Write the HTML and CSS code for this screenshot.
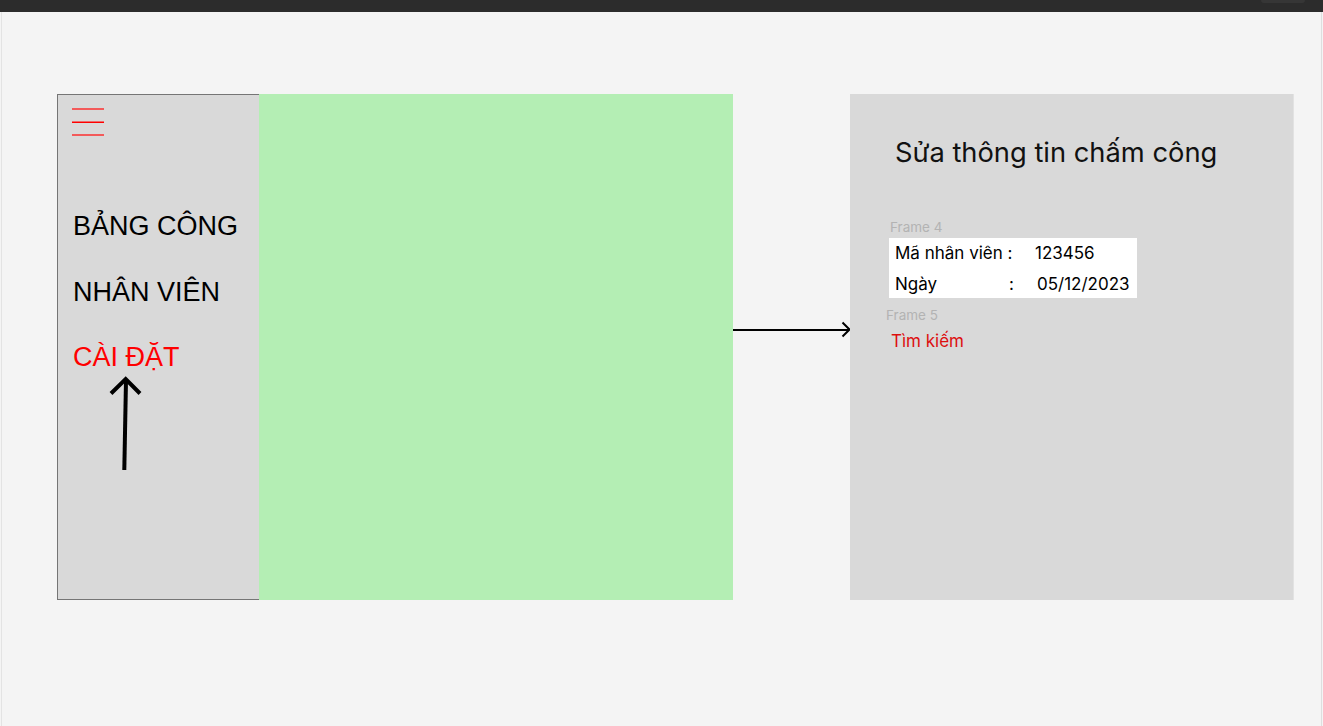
FILE: index.html
```html
<!DOCTYPE html>
<html lang="vi">
<head>
<meta charset="utf-8">
<title>Sửa thông tin chấm công</title>
<link rel="stylesheet" href="styles.css">
</head>
<body>
<div class="topbar"><span class="pill"></span></div>
<div class="canvas">
  <div class="stage">
    <aside class="sidebar">
      <svg class="hamburger" width="32" height="29" viewBox="0 0 32 29">
        <rect x="0" y="1" width="32" height="2" fill="#f35a5a"/>
        <rect x="0" y="14.5" width="32" height="1.5" fill="#ff0000"/>
        <rect x="0" y="27" width="32" height="2" fill="#f35a5a"/>
      </svg>
      <nav class="menu">
        <div class="menu-item">BẢNG CÔNG</div>
        <div class="menu-item">NHÂN VIÊN</div>
        <div class="menu-item active">CÀI ĐẶT</div>
      </nav>
      <svg class="up-arrow" width="42" height="98" viewBox="0 0 42 98">
        <path d="M20.3 96 L22 6" stroke="#000" stroke-width="4" fill="none"/>
        <path d="M7 19.5 L21.7 5 L36 19.5" stroke="#000" stroke-width="4" fill="none" stroke-linejoin="miter"/>
      </svg>
    </aside>
    <section class="green"></section>
    <div class="connector">
      <svg width="117" height="506" viewBox="0 0 117 506">
        <path d="M0 236 L116 236" stroke="#000" stroke-width="2" fill="none"/>
        <path d="M109.5 228.5 L116.5 235.5 L109.5 242.5" stroke="#000" stroke-width="2" fill="none"/>
      </svg>
    </div>
    <section class="panel">
      <h1 class="title">Sửa thông tin chấm công</h1>
      <div class="frame-label f4">Frame 4</div>
      <div class="info">
        <div class="row r1"><span class="lbl1">Mã nhân viên :</span><span>123456</span></div>
        <div class="row r2"><span class="lbl2">Ngày</span><span class="colon">:</span><span>05/12/2023</span></div>
      </div>
      <div class="frame-label f5">Frame 5</div>
      <div class="search">Tìm kiếm</div>
    </section>
  </div>
</div>
</body>
</html>
```

FILE: styles.css
```css
html, body {
  margin: 0;
  padding: 0;
  background: #f4f4f4;
  overflow: hidden;
}
body {
  width: 1323px;
  height: 726px;
  font-family: "Liberation Sans", Arial, sans-serif;
}
.topbar {
  height: 12px;
  background: #2c2c2c;
  display: flex;
  justify-content: flex-end;
}
.pill {
  width: 44px;
  height: 3px;
  margin-right: 18px;
  background: #363636;
  border-radius: 0 0 10px 10px;
}
.canvas {
  height: 714px;
  margin-left: 1px;
  margin-right: 1px;
  border-left: 1px solid #e3e3e3;
  border-right: 1px solid #dedede;
  box-sizing: border-box;
}
.stage {
  display: flex;
  padding-top: 82px;
  padding-left: 55px;
}
.sidebar {
  width: 202px;
  height: 506px;
  box-sizing: border-box;
  background: #d9d9d9;
  border: 1px solid #757575;
  border-right: none;
  padding-left: 14px;
  display: flex;
  flex-direction: column;
}
.hamburger {
  display: block;
  margin-top: 12px;
}
.menu {
  margin-top: 58px;
  padding-left: 1px;
}
.menu-item {
  font-size: 27px;
  line-height: 65.5px;
  color: #000;
  white-space: nowrap;
}
.menu-item.active {
  color: #ff0000;
}
.up-arrow {
  display: block;
  margin-top: -17px;
  margin-left: 32px;
}
.green {
  width: 474px;
  height: 506px;
  background: #b4eeb4;
}
.connector {
  width: 117px;
  height: 506px;
}
.connector svg {
  display: block;
}
.panel {
  width: 444px;
  height: 506px;
  box-sizing: border-box;
  background: #d9d9d9;
  border-right: 1px solid #e2e2e2;
  padding-top: 43px;
  font-family: Inter, "Noto Sans", sans-serif;
}
.title {
  margin: 0 0 0 45px;
  font-size: 27.3px;
  font-weight: 400;
  line-height: 32px;
  color: #111;
  white-space: nowrap;
}
.frame-label {
  font-size: 13.5px;
  line-height: 15px;
  color: #b3b3b3;
}
.f4 {
  margin-top: 51px;
  margin-left: 40px;
}
.info {
  margin-top: 3px;
  margin-left: 39px;
  width: 248px;
  height: 60px;
  background: #fff;
  padding-left: 6px;
  box-sizing: border-box;
  font-size: 17px;
  color: #000;
}
.row {
  display: flex;
  white-space: nowrap;
}
.r1 {
  line-height: 30px;
}
.r2 {
  line-height: 28px;
  margin-top: 2px;
}
.lbl1 {
  width: 140px;
}
.lbl2 {
  width: 114px;
}
.colon {
  width: 28px;
}
.f5 {
  margin-top: 10px;
  margin-left: 36px;
}
.search {
  margin-top: 8px;
  margin-left: 41px;
  font-size: 17px;
  line-height: 20px;
  color: #dd0f0f;
}
```
